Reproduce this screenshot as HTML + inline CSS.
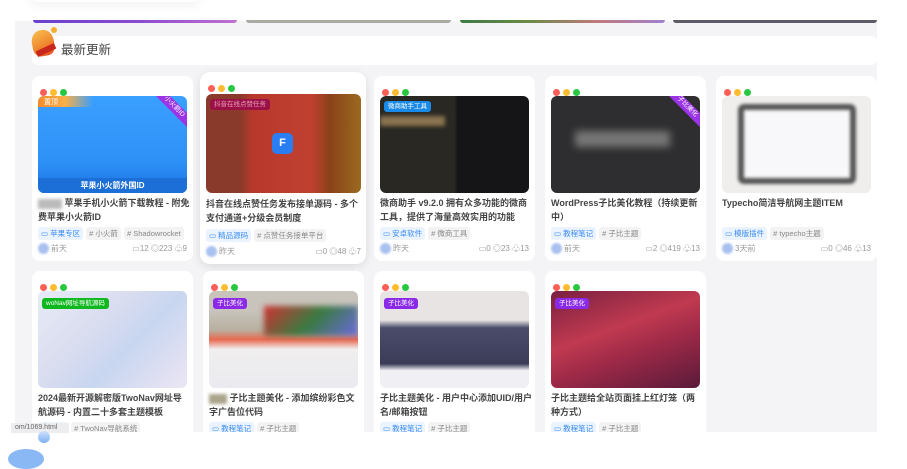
<!DOCTYPE html>
<html><head><meta charset="utf-8">
<style>
*{margin:0;padding:0;box-sizing:border-box}
body{width:907px;height:455px;overflow:hidden;background:#fff;font-family:"Liberation Sans","Noto Sans CJK SC",sans-serif;position:relative}
.abs{position:absolute}
.wrap{position:absolute;left:15px;top:21px;width:862px;height:411px;background:#f4f4f6;overflow:hidden}
.bar{position:absolute;top:20px;height:3px;border-radius:0 0 3px 3px}
.card{position:absolute;background:#fff;border-radius:8px;width:161px;height:185px}
.dots{position:absolute;left:8px;top:7px}
.dots i{display:inline-block;width:7px;height:7px;border-radius:50%;margin-right:3px}
.img{position:absolute;left:6px;top:20px;width:149px;height:97px;border-radius:6px;overflow:hidden}
.badge{position:absolute;left:4px;top:5px;font-size:6.5px;color:#fff;padding:2px 4px;border-radius:3px;line-height:7px}
.title{position:absolute;left:6px;top:121px;width:152px;font-size:9px;line-height:13.5px;color:#444;font-weight:600}
.tags{position:absolute;left:6px;top:151px;font-size:7.5px;line-height:13px;white-space:nowrap}
.tags span{display:inline-block;padding:0 3px;border-radius:3px;margin-right:3px;background:#f3f3f3;color:#888}
.tags span.c{background:#eaf3fe;color:#3b8cf4}
.meta{position:absolute;left:6px;top:167px;width:149px;font-size:8px;color:#999;line-height:12px}
.meta .av{display:inline-block;width:11px;height:11px;border-radius:50%;background:#a9c1ef;vertical-align:middle;margin-right:2px;filter:blur(1px)}
.meta .r{position:absolute;right:0;top:0}
</style></head><body>
<div class="abs" style="left:30px;top:-14px;width:170px;height:16px;border-radius:10px;box-shadow:0 4px 10px rgba(0,0,0,.05);background:#fff"></div>
<div class="wrap"></div>
<div class="bar" style="left:33px;width:204px;background:linear-gradient(90deg,#6a3fd0,#8a4ad0,#c070d0)"></div>
<div class="bar" style="left:246px;width:205px;background:#aaa9a2"></div>
<div class="bar" style="left:460px;width:205px;background:linear-gradient(90deg,#3f7a43,#6a8a4a,#c07a7a,#a080d0)"></div>
<div class="bar" style="left:673px;width:204px;background:#5c5c66"></div>

<div class="abs" style="left:32px;top:36px;width:845px;height:29px;background:#fff;border-radius:6px"></div>
<div class="abs" style="left:32px;top:30px;width:22px;height:26px;border-radius:45% 45% 35% 35%;background:linear-gradient(160deg,#f7c050,#f08a30 55%,#e04a20);transform:rotate(-10deg)"></div>
<div class="abs" style="left:36px;top:47px;width:20px;height:6px;background:#c8281c;transform:rotate(-25deg)"></div>
<div class="abs" style="left:51px;top:27px;width:6px;height:6px;border-radius:50%;background:#f5b030"></div>
<div class="abs" style="left:61px;top:42px;font-size:12.5px;color:#444;line-height:16px">最新更新</div>

<!-- Row 1 -->
<div class="card" style="left:32px;top:76px">
 <div class="dots"><i style="background:#fd5f57"></i><i style="background:#febc2e"></i><i style="background:#27c840"></i></div>
 <div class="img" style="background:linear-gradient(180deg,#3aa0ff,#2d90f6 70%,#1a6fe0)">
  <div class="abs" style="left:0;top:0;width:55px;height:11px;background:linear-gradient(90deg,#f58a2a,#f7b04a,rgba(247,176,74,0))"></div>
  <div class="badge" style="top:1px;left:2px;background:none;font-size:7px">置顶</div>
  <div class="abs" style="right:-12px;top:6px;width:50px;height:10px;background:#9b34e6;transform:rotate(45deg);font-size:6.5px;color:#fff;text-align:center;line-height:10px">小火箭ID</div>
  <div class="abs" style="left:0;bottom:0;width:149px;height:15px;background:#1d6fd8;color:#fff;font-size:8px;text-align:center;line-height:15px;font-weight:bold">苹果小火箭外国ID</div>
 </div>
 <div class="title"><span style="display:inline-block;width:24px;height:10px;background:#bbb;filter:blur(1.5px);vertical-align:middle"></span> 苹果手机小火箭下载教程 - 附免费苹果小火箭ID</div>
 <div class="tags"><span class="c">▭ 苹果专区</span><span># 小火箭</span><span># Shadowrocket</span></div>
 <div class="meta"><span class="av"></span>前天<span class="r">▭12 ◎223 ♧9</span></div>
</div>

<div class="card" style="left:200px;top:72px;width:166px;height:192px;border-radius:10px;box-shadow:0 3px 10px rgba(0,0,0,.10)">
 <div class="dots"><i style="background:#fd5f57"></i><i style="background:#febc2e"></i><i style="background:#27c840"></i></div>
 <div class="img" style="top:22px;width:155px;height:99px;background:linear-gradient(90deg,#8a3a2a 0 22%,#b8392c 30%,#c04030 68%,#8a4218 80%,#9a6a20)">
  <div class="badge" style="background:#9c1048;color:#e8a0b8">抖音在线点赞任务</div>
  <div class="abs" style="left:66px;top:39px;width:21px;height:21px;border-radius:5px;background:#2a7ef2;color:#fff;font-size:11px;text-align:center;line-height:21px;font-weight:bold">F</div>
 </div>
 <div class="title" style="top:126px;width:158px">抖音在线点赞任务发布接单源码 - 多个支付通道+分级会员制度</div>
 <div class="tags" style="top:157px"><span class="c">▭ 精品源码</span><span># 点赞任务接单平台</span></div>
 <div class="meta" style="top:174px;width:155px"><span class="av"></span>昨天<span class="r">▭0 ◎48 ♧7</span></div>
</div>

<div class="card" style="left:374px;top:76px">
 <div class="dots"><i style="background:#fd5f57"></i><i style="background:#febc2e"></i><i style="background:#27c840"></i></div>
 <div class="img" style="background:linear-gradient(90deg,#2a2822 0 50%,#151416 52%);">
  <div class="abs" style="left:0;top:20px;width:65px;height:10px;background:#8a7450;filter:blur(2px)"></div>
  <div class="badge" style="background:#1a8ae8">微商助手工具</div>
 </div>
 <div class="title">微商助手 v9.2.0 拥有众多功能的微商工具，提供了海量高效实用的功能</div>
 <div class="tags"><span class="c">▭ 安卓软件</span><span># 微商工具</span></div>
 <div class="meta"><span class="av"></span>昨天<span class="r">▭0 ◎23 ♧13</span></div>
</div>

<div class="card" style="left:545px;top:76px">
 <div class="dots"><i style="background:#fd5f57"></i><i style="background:#febc2e"></i><i style="background:#27c840"></i></div>
 <div class="img" style="background:#2e2e30">
  <div class="abs" style="left:24px;top:35px;width:95px;height:16px;background:#777;filter:blur(4px)"></div>
  <div class="abs" style="right:-12px;top:6px;width:50px;height:10px;background:#9b34e6;transform:rotate(45deg);font-size:6.5px;color:#fff;text-align:center;line-height:10px">子比美化</div>
 </div>
 <div class="title">WordPress子比美化教程（持续更新中）</div>
 <div class="tags"><span class="c">▭ 教程笔记</span><span># 子比主题</span></div>
 <div class="meta"><span class="av"></span>前天<span class="r">▭2 ◎419 ♧13</span></div>
</div>

<div class="card" style="left:716px;top:76px">
 <div class="dots"><i style="background:#fd5f57"></i><i style="background:#febc2e"></i><i style="background:#27c840"></i></div>
 <div class="img" style="background:#f0eeec">
  <div class="abs" style="left:16px;top:8px;width:118px;height:80px;border:6px solid #555;border-radius:6px;background:#f8f8fa;filter:blur(1.5px)"></div>
 </div>
 <div class="title">Typecho简洁导航网主题ITEM</div>
 <div class="tags"><span class="c">▭ 模版插件</span><span># typecho主题</span></div>
 <div class="meta"><span class="av"></span>3天前<span class="r">▭0 ◎46 ♧13</span></div>
</div>

<!-- Row 2 -->
<div class="card" style="left:32px;top:271px">
 <div class="dots"><i style="background:#fd5f57"></i><i style="background:#febc2e"></i><i style="background:#27c840"></i></div>
 <div class="img" style="background:linear-gradient(135deg,#e8eaf6,#d8dcef 40%,#c8d6f0 60%,#ece6f4)">
  <div class="badge" style="background:#10b820;top:7px">woNav网址导航源码</div>
 </div>
 <div class="title">2024最新开源解密版TwoNav网址导航源码 - 内置二十多套主题模板</div>
 <div class="tags"><span class="c">▭ 源码</span><span># TwoNav导航系统</span></div>
</div>

<div class="card" style="left:203px;top:271px">
 <div class="dots"><i style="background:#fd5f57"></i><i style="background:#febc2e"></i><i style="background:#27c840"></i></div>
 <div class="img" style="background:linear-gradient(180deg,#c8c4bc 0 20%,#b8b0a0 40%,#e86a50 50%,#f0eeee 60%,#eaeaf0)">
  <div class="abs" style="left:55px;top:15px;width:94px;height:30px;background:linear-gradient(135deg,#d03030,#3a7a40,#6a6ae0);filter:blur(3px)"></div>
  <div class="badge" style="background:#8a2ae8;top:7px">子比美化</div>
 </div>
 <div class="title"><span style="display:inline-block;width:18px;height:10px;background:#aaa48a;filter:blur(1.5px);vertical-align:middle"></span> 子比主题美化 - 添加缤纷彩色文字广告位代码</div>
 <div class="tags"><span class="c">▭ 教程笔记</span><span># 子比主题</span></div>
</div>

<div class="card" style="left:374px;top:271px">
 <div class="dots"><i style="background:#fd5f57"></i><i style="background:#febc2e"></i><i style="background:#27c840"></i></div>
 <div class="img" style="background:linear-gradient(180deg,#e8e4e4 0 30%,#4a4c6a 38%,#3a3c58 75%,#f0f0f4 82%)">
  <div class="badge" style="background:#8a2ae8;top:7px">子比美化</div>
 </div>
 <div class="title">子比主题美化 - 用户中心添加UID/用户名/邮箱按钮</div>
 <div class="tags"><span class="c">▭ 教程笔记</span><span># 子比主题</span></div>
</div>

<div class="card" style="left:545px;top:271px">
 <div class="dots"><i style="background:#fd5f57"></i><i style="background:#febc2e"></i><i style="background:#27c840"></i></div>
 <div class="img" style="background:linear-gradient(160deg,#7a2040,#c03a50 40%,#a02a48 60%,#5a1a3a)">
  <div class="badge" style="background:#8a2ae8;top:7px">子比美化</div>
 </div>
 <div class="title">子比主题给全站页面挂上红灯笼（两种方式）</div>
 <div class="tags"><span class="c">▭ 教程笔记</span><span># 子比主题</span></div>
</div>

<div class="abs" style="left:0;top:432px;width:907px;height:23px;background:#fff"></div>
<div class="abs" style="left:11px;top:423px;width:58px;height:10px;background:#ededf0;font-size:7px;color:#666;line-height:10px;padding-left:4px">om/1069.html</div>
<div class="abs" style="left:38px;top:431px;width:12px;height:12px;border-radius:50%;background:linear-gradient(#cfe0fb,#7fb0f3)"></div>
<div class="abs" style="left:8px;top:449px;width:36px;height:20px;border-radius:50%;background:#8ab8f5"></div>
</body></html>
